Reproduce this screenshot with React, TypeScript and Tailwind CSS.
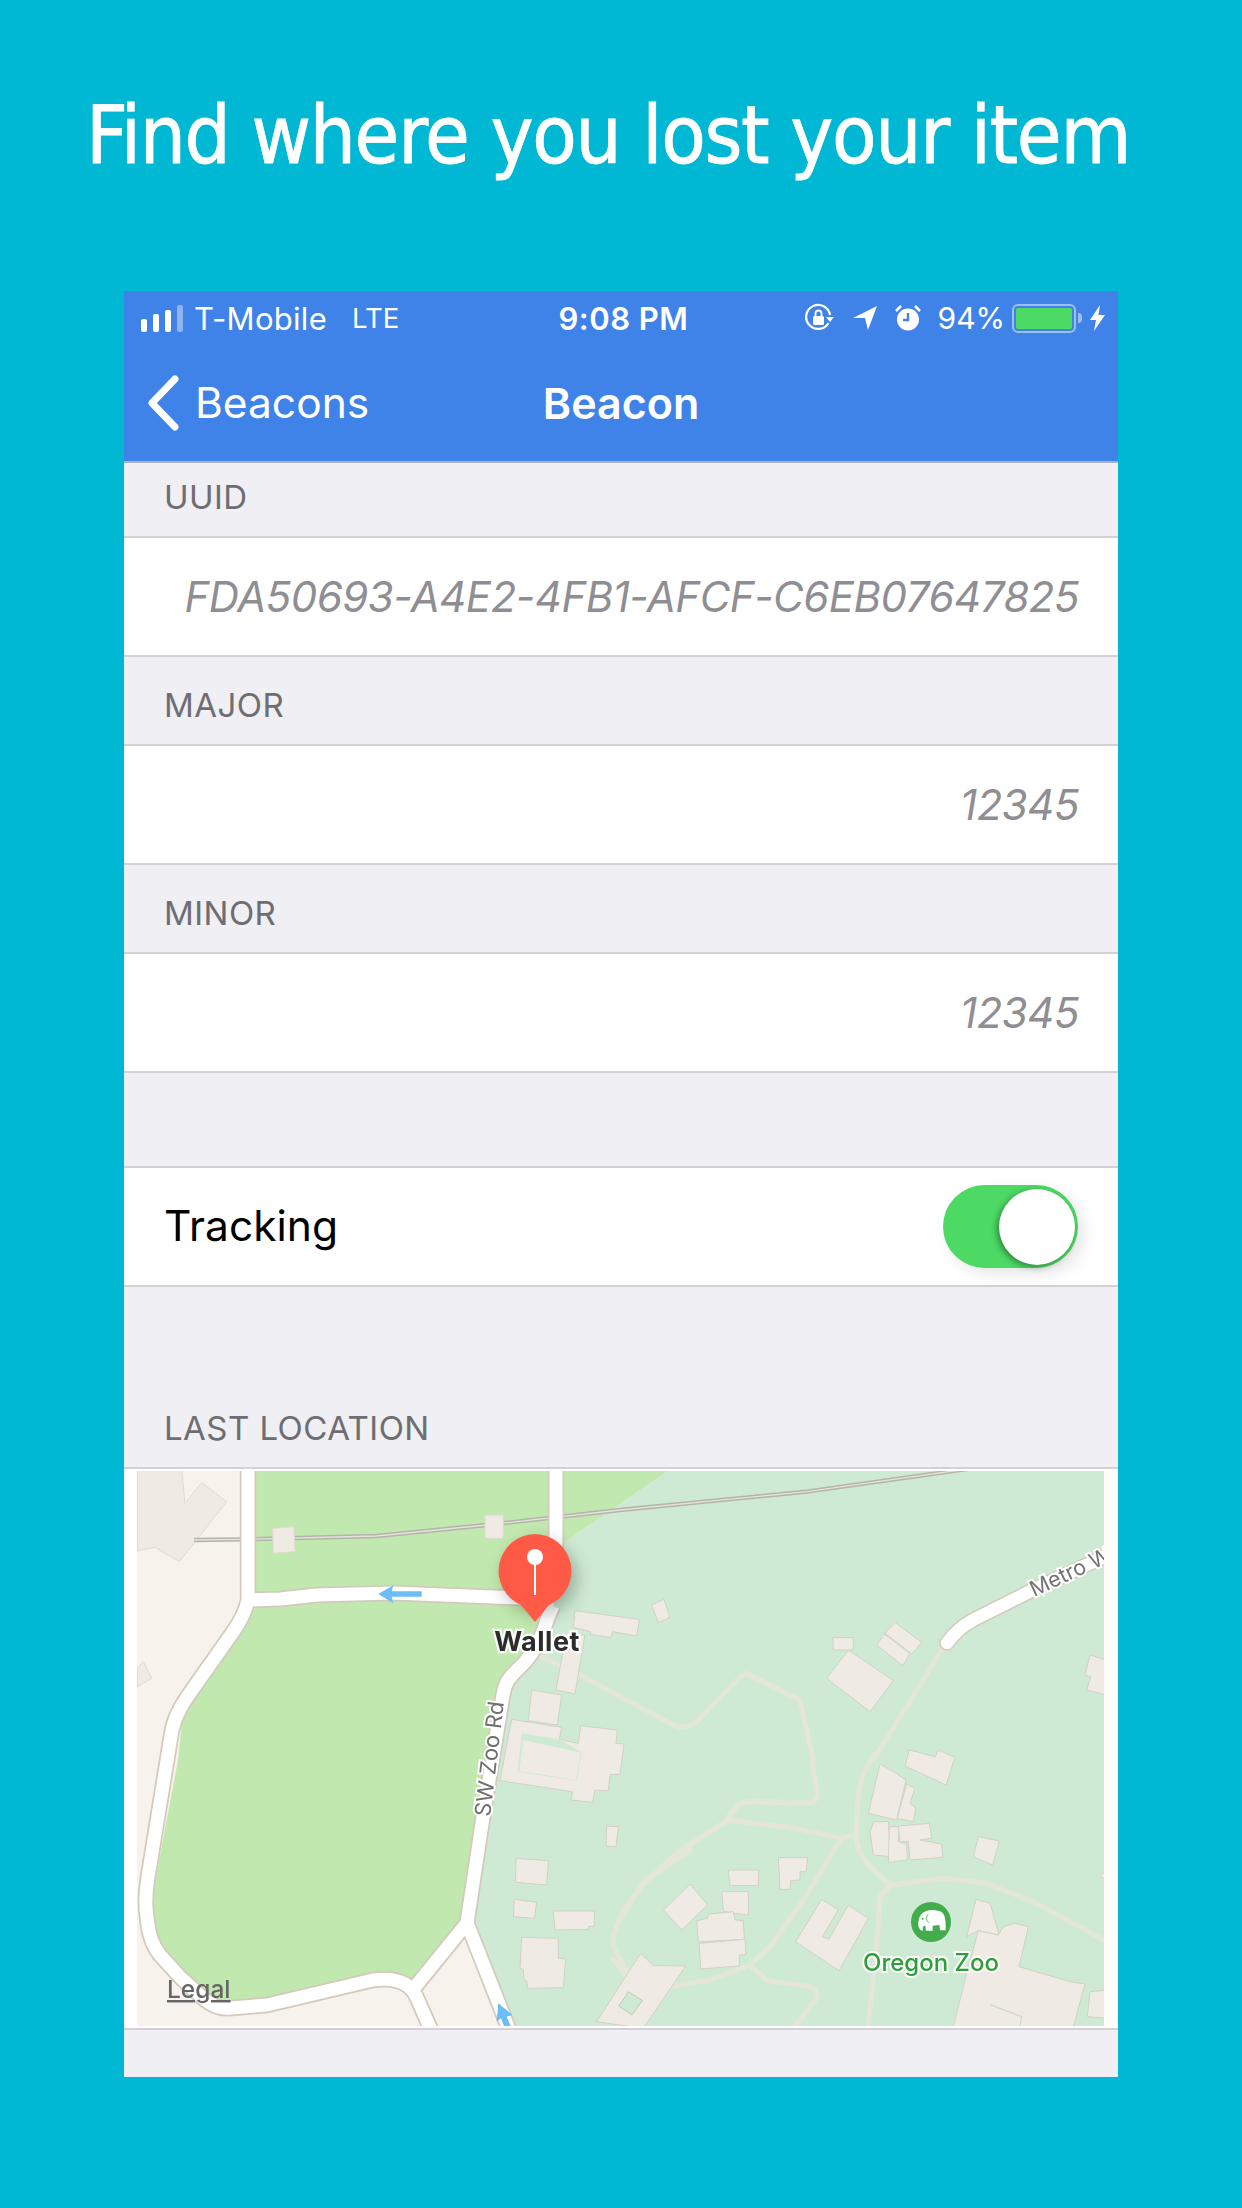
import React from "react";

const Z = ({ x, y, children }: { x: number; y: number; children: React.ReactNode }) => (
  <g transform={`translate(${x} ${y}) scale(0.33333)`}>{children}</g>
);

const B = ({ p, fill = "#efebe4", stroke = "#cfd2c4" }: { p: string; fill?: string; stroke?: string }) => (
  <polygon points={p} fill={fill} stroke={stroke} strokeWidth={3} strokeLinejoin="round" />
);

const P = ({ d }: { d: string }) => (
  <path d={d} fill="none" stroke="#e4e6d8" strokeWidth={15} strokeLinecap="round" strokeLinejoin="round" />
);

const ZOO = "#ceead4";
const PARK = "#c1e8ae";

const roads = [
  "M248 1465 L248 1600 C246 1610 240 1622 233 1632 L197 1683 C185 1700 176 1712 172 1730 L148 1877 C145 1895 145 1905 147 1917 C149 1935 152 1945 160 1955 L180 1977 L205 2000 C215 2007 222 2009 232 2008 L267 2005 L373 1980 C388 1978 398 1980 405 1984 C412 1988 414 1992 417 1998 L432 2032",
  "M248 1600 L280 1599 L317 1595 L393 1593 L520 1598 L553 1606",
  "M556 1465 L556 1560",
  "M553 1606 L547 1620 C543 1635 535 1650 525 1662 C512 1675 505 1680 503 1695 L483 1817 L467 1923",
  "M467 1923 L415 1987",
  "M467 1923 L510 2032",
];

const MapView = () => (
  <svg viewBox="137 1471 967 555" width={967} height={555} className="block blur-[0.5px]">
    <defs>
      <filter id="pinShadow" x="-50%" y="-50%" width="200%" height="200%">
        <feGaussianBlur stdDeviation="9" />
      </filter>
    </defs>
    <rect x={137} y={1471} width={967} height={555} fill="#f7f3ec" />
    <polygon points="668,1471 1104,1471 1104,2026 510,2026 467,1923 490,1790 503,1690 553,1610 563,1543" fill={ZOO} />
    <polygon points="255,1471 668,1471 563,1543 545,1600 255,1600" fill={PARK} />
    <polygon
      points="255,1608 320,1603 393,1600 520,1606 548,1612 525,1655 500,1687 490,1760 477,1827 460,1923 415,1982 407,1977 373,1973 267,1998 230,2002 207,1997 160,1950 153,1917 153,1893 178,1760 183,1713 203,1687 237,1633"
      fill={PARK}
    />

    <Z x={120} y={1460}>
      <B p="52,32 185,32 195,130 245,68 320,125 178,305 105,262 52,272" fill="#efebe4" stroke="#dedad0" />
      <B p="52,625 70,605 95,655 52,680" stroke="#dedad0" />
      <path d="M222 240 L370 238 L770 228 L1100 195 L1500 150" fill="none" stroke="#b4b4ac" strokeWidth={13} />
      <path d="M222 240 L370 238 L770 228 L1100 195 L1500 150" fill="none" stroke="#e4e4da" strokeWidth={4} />
    </Z>
    <Z x={620} y={1460}>
      <path d="M0 150 L560 95 L1050 26" fill="none" stroke="#b4b4ac" strokeWidth={13} />
      <path d="M0 150 L560 95 L1050 26" fill="none" stroke="#e4e4da" strokeWidth={4} />
    </Z>

    {/* footpaths */}
    <Z x={480} y={1590}>
      <P d="M170 195 L300 255 L570 400 Q610 425 650 395 L780 260 Q795 245 810 255 L900 300" />
      <P d="M610 775 L730 700 L770 650 Q790 635 810 635 L900 635" />
      <P d="M745 690 L900 710" />
    </Z>
    <Z x={620} y={1460}>
      <P d="M375 640 L540 720 L580 900" />
      <P d="M965 570 L760 900" />
    </Z>
    <Z x={620} y={1760}>
      <P d="M575 0 L592 100 Q590 130 560 130 L380 125 Q355 125 340 150 L320 180 L280 210 L170 280 L60 380 L0 480" />
      <P d="M320 180 L530 205 L660 235 L708 225" />
      <P d="M660 240 L550 420 L450 560 L390 615 L270 660 L150 680" />
      <P d="M765 -20 L730 40 L715 100 L708 230 Q715 280 740 310 L810 375 L970 355 L1100 370 L1250 430 L1460 545" />
      <P d="M810 375 L780 410 L770 560 L745 800" />
      <P d="M395 620 L440 660 L570 680 Q595 690 590 715 L525 800" />
      <P d="M-20 600 L20 650" />
    </Z>
    <Z x={480} y={1850}>
      <P d="M445 370 L410 310 Q390 270 410 230 L430 180 L500 90 L630 0" />
    </Z>

    {/* roads */}
    {roads.map((d) => (
      <path key={d + "c"} d={d} fill="none" stroke="#d3cabd" strokeWidth={16.5} strokeLinejoin="round" />
    ))}
    {roads.map((d) => (
      <path key={d} d={d} fill="none" stroke="#ffffff" strokeWidth={13} strokeLinejoin="round" />
    ))}
    <path d="M947 1643 C955 1632 962 1626 973 1620 L1037 1588 L1110 1554" fill="none" stroke="#d3cabd" strokeWidth={15.5} strokeLinecap="round" />
    <path d="M947 1643 C955 1632 962 1626 973 1620 L1037 1588 L1110 1554" fill="none" stroke="#ffffff" strokeWidth={12.5} strokeLinecap="round" />

    {/* buildings */}
    <Z x={120} y={1460}>
      <B p="458,205 522,200 525,275 460,280" stroke="#dedad0" />
      <B p="1095,165 1150,165 1150,235 1095,235" stroke="#dedad0" />
    </Z>
    <Z x={480} y={1590}>
      <B p="285,62 478,88 470,138 397,125 393,143 332,133 332,125 280,112" />
      <B p="515,45 552,28 570,82 535,98" />
      <B p="258,135 315,135 285,312 228,300" />
      <B p="155,300 245,315 232,405 145,392" />
      <B p="95,388 245,412 238,448 295,460 302,407 412,420 408,460 432,462 420,553 390,553 385,602 345,600 338,637 273,630 277,605 60,572" />
      <polygon points="125,430 238,448 305,487 290,572 113,545" fill={ZOO} />
      <polygon points="130,450 302,488 288,570 118,543" fill="#efebe4" />
      <B p="380,708 415,710 408,770 378,768" />
    </Z>
    <Z x={480} y={1850}>
      <B p="108,25 205,32 200,105 107,97" />
      <B p="103,148 170,157 163,205 100,200" />
      <B p="220,183 343,183 343,228 325,230 325,238 225,240" />
      <B p="125,262 235,265 235,325 257,327 250,413 143,415 140,392 132,390 130,358 120,356" />
      <B p="550,180 630,102 683,165 605,240" />
      <B p="745,60 837,60 835,107 750,107" />
      <B p="725,125 805,125 805,195 762,190 730,183" />
      <B p="650,212 683,205 685,192 760,185 765,210 790,212 793,268 655,276" />
      <B p="657,280 795,268 798,312 778,316 778,348 662,357" />
      <B p="482,310 520,347 617,348 490,535 350,515" />
      <polygon points="445,425 487,452 455,495 417,468" fill={ZOO} stroke="#bfc9b8" strokeWidth={3} />
    </Z>
    <Z x={620} y={1460}>
      <B p="638,533 700,533 700,570 640,570" />
      <B p="685,570 820,662 750,755 620,655" />
      <B p="825,487 905,547 875,582 795,520" />
      <B p="793,522 870,580 848,617 770,555" />
      <B p="1410,585 1460,600 1460,705 1400,690 1412,650 1395,645" />
      <B p="868,870 945,890 955,870 1005,892 978,975 855,918" />
    </Z>
    <Z x={620} y={1760}>
      <B p="780,12 820,35 858,60 830,180 745,160" />
      <B p="860,72 885,85 870,130 888,145 880,185 832,175" />
      <B p="762,185 805,185 815,290 760,285 750,215" />
      <B p="808,200 838,200 835,245 860,252 862,300 805,307" />
      <B p="835,198 928,190 935,235 900,240 965,252 968,292 870,300 865,245 840,245" />
      <B p="1075,230 1138,243 1118,315 1060,290" />
      <B p="1460,325 1460,360 1440,350" />
      <B p="475,293 563,293 558,335 540,335 540,360 512,362 510,388 480,388" />
      <B p="605,418 655,450 607,530 627,537 685,435 745,475 657,632 527,545" />
      <B p="1068,418 1110,430 1138,525 1075,512 1040,530" />
      <B p="1075,512 1135,525 1150,500 1185,490 1225,500 1197,620 1350,665 1395,672 1360,800 1000,800 1040,640" />
      <path d="M1112 735 L1205 770 L1200 800" fill="none" stroke="#d4d6c8" strokeWidth={4} />
      <B p="1410,695 1460,690 1460,775 1402,770" />
    </Z>

    {/* one-way arrows */}
    <Z x={120} y={1460}>
      <path d="M775 402 L820 376 L815 394 L905 394 L905 410 L815 410 L820 430 Z" fill="#6bbdf8" />
    </Z>
    <Z x={120} y={1760}>
      <path d="M1135 730 L1177 765 L1160 770 L1172 798 L1152 798 L1143 775 L1130 785 Z" fill="#6bbdf8" />
    </Z>

    {/* labels */}
    <text
      x={0}
      y={0}
      transform="translate(491 1759) rotate(-83)"
      textAnchor="middle"
      fontFamily="Inter, sans-serif"
      fontSize={22}
      fill="#6f6f6f"
      stroke="#ffffff"
      strokeWidth={4}
      paintOrder="stroke"
      dominantBaseline="middle"
    >
      SW Zoo Rd
    </text>
    <text
      x={0}
      y={0}
      transform="translate(1034 1597) rotate(-25)"
      fontFamily="Inter, sans-serif"
      fontSize={21.5}
      fill="#737373"
      stroke="#ffffff"
      strokeWidth={4}
      paintOrder="stroke"
    >
      Metro W
    </text>
    <text x={167} y={1998} fontFamily="Inter, sans-serif" fontWeight={500} fontSize={24.5} fill="#666666" textDecoration="underline">
      Legal
    </text>

    {/* zoo */}
    <circle cx={931} cy={1922} r={20} fill="#43ad4b" />
    <Z x={620} y={1760}>
      <path
        d="M896 482 C898 460 920 447 945 451 L960 454 C972 458 979 472 977 511 L960 511 L958 495 L938 497 L938 512 L918 512 L916 497 C908 497 906 505 910 512 C898 512 892 498 896 482 Z"
        fill="#ffffff"
      />
      <circle cx={908} cy={476} r={3} fill="#43ad4b" />
      <path d="M925 462 C917 470 917 482 927 488" fill="none" stroke="#43ad4b" strokeWidth={2.5} />
    </Z>
    <text
      x={931}
      y={1971}
      textAnchor="middle"
      fontFamily="Inter, sans-serif"
      fontWeight={500}
      fontSize={24}
      fill="#2f9e3a"
      stroke="#ffffff"
      strokeOpacity={0.85}
      strokeWidth={4}
      paintOrder="stroke"
    >
      Oregon Zoo
    </text>

    {/* pin */}
    <circle cx={540} cy={1578} r={36} fill="#000000" opacity={0.28} filter="url(#pinShadow)" />
    <path d="M535 1534 A37 37 0 0 1 549 1605 L535 1622 L521 1605 A37 37 0 0 1 535 1534 Z" fill="#ff5a45" />
    <circle cx={535} cy={1557} r={8} fill="#ffffff" />
    <rect x={534} y={1565} width={2} height={30} fill="#ffffff" />
    <text
      x={537}
      y={1651}
      textAnchor="middle"
      fontFamily="Inter, sans-serif"
      fontWeight={700}
      fontSize={27}
      letterSpacing={0.5}
      fill="#2c2c2c"
      stroke="#ffffff"
      strokeOpacity={0.9}
      strokeWidth={4.5}
      paintOrder="stroke"
    >
      Wallet
    </text>
  </svg>
);

const SectionHeader = ({ label, h }: { label: string; h: string }) => (
  <div className={`${h} flex items-end bg-[#efeff4] pb-[19px] pl-[40px]`}>
    <span className="text-[33px] leading-[40px] tracking-[0.45px] text-[#6d6d72]">{label}</span>
  </div>
);

const ValueRow = ({ value }: { value: string }) => (
  <div className="flex h-[121px] items-center justify-end border-y-2 border-[#d2d2d6] bg-white pr-[39px]">
    <span className="text-[42px] italic leading-none tracking-[-0.47px] text-[#8e8e93]">{value}</span>
  </div>
);

const StatusIcons = () => (
  <div className="flex items-center justify-end gap-0 pr-[13px]">
    <svg width={30} height={30} viewBox="0 0 30 30" className="mr-[18px]">
      <path d="M24.5 20 A12 12 0 1 1 26 12" fill="none" stroke="#fff" strokeWidth={2.2} />
      <path d="M22 14 L30 14 L26 19 Z" fill="#fff" />
      <rect x={9} y={13} width={11} height={9} rx={1.5} fill="#fff" />
      <path d="M11.5 13 V10.5 A3 3 0 0 1 17.5 10.5 V13" fill="none" stroke="#fff" strokeWidth={1.8} />
    </svg>
    <svg width={26} height={26} viewBox="0 0 26 26" className="mr-[16px]">
      <path d="M25 1 L16 25 L13 13 L1 13 Z" fill="#fff" />
    </svg>
    <svg width={28} height={28} viewBox="0 0 28 28" className="mr-[16px]">
      <circle cx={14} cy={15.5} r={11} fill="#fff" />
      <path d="M14 9 V16 H9" fill="none" stroke="#3f83e9" strokeWidth={2.4} />
      <path d="M2 7 L7 2 M26 7 L21 2" stroke="#fff" strokeWidth={2.6} />
    </svg>
    <span className="mr-[7px] text-[30px] leading-none text-white">94%</span>
    <div className="flex h-[29px] w-[64px] items-center rounded-[6px] border-2 border-[#9dbff4] p-[2px]">
      <div className="h-full w-full rounded-[2px] bg-[#4cd964]" />
    </div>
    <div className="ml-[2px] mr-[8px] h-[10px] w-[4px] rounded-r-full bg-[#9dbff4]" />
    <svg width={15} height={26} viewBox="0 0 15 26">
      <path d="M10 0 L0 15 L6 15 L4 26 L15 10 L8.5 10 Z" fill="#fff" />
    </svg>
  </div>
);

export default function App() {
  return (
    <div className="min-h-[2208px] bg-[#00b8d4] [font-family:Inter,sans-serif]">
      <div className="flex h-[291px] items-start pl-[86px] pt-[85px]">
        <h1 className="whitespace-nowrap text-[81px] font-normal leading-[100px] tracking-[-1.3px] text-white [-webkit-text-stroke:0.8px_white] [font-family:'DejaVu_Sans_Condensed','DejaVu_Sans',sans-serif] [font-stretch:condensed]">
          Find where you lost your item
        </h1>
      </div>

      <div className="mx-auto flex w-[994px] flex-col bg-[#efeff4]">
        <div className="flex h-[172px] flex-col border-b-2 border-[#a9b2c4] bg-[#3f83e9]">
          <div className="grid h-[54px] grid-cols-[1fr_auto_1fr] items-center">
            <div className="flex items-center pl-[17px]">
              <div className="mr-[11px] flex h-[27px] items-end gap-[6px]">
                <div className="h-[13px] w-[6px] rounded-[2px] bg-white" />
                <div className="h-[18px] w-[6px] rounded-[2px] bg-white" />
                <div className="h-[22px] w-[6px] rounded-[2px] bg-white" />
                <div className="h-[27px] w-[6px] rounded-[2px] bg-[#8fb6f2]" />
              </div>
              <span className="text-[31px] leading-none tracking-[0.3px] text-white">T-Mobile</span>
              <span className="ml-[25px] pt-[2px] text-[27.5px] leading-none text-white">LTE</span>
            </div>
            <span className="pl-[5px] text-[31px] font-semibold leading-none tracking-[0.5px] text-white">9:08 PM</span>
            <StatusIcons />
          </div>
          <div className="grid h-[116px] grid-cols-[1fr_auto_1fr] items-center">
            <div className="flex items-center pl-[22px]">
              <svg width={34} height={56} viewBox="0 0 34 56" className="mr-[15px]">
                <path d="M29 4 L6 28 L29 52" fill="none" stroke="#fff" strokeWidth={7} strokeLinecap="round" strokeLinejoin="round" />
              </svg>
              <span className="text-[42.5px] leading-none text-white">Beacons</span>
            </div>
            <span className="text-[43px] font-semibold leading-none text-white">Beacon</span>
            <div />
          </div>
        </div>

        <SectionHeader label="UUID" h="h-[73px]" />
        <ValueRow value="FDA50693-A4E2-4FB1-AFCF-C6EB07647825" />
        <SectionHeader label="MAJOR" h="h-[87px]" />
        <ValueRow value="12345" />
        <SectionHeader label="MINOR" h="h-[87px]" />
        <ValueRow value="12345" />
        <div className="h-[93px]" />

        <div className="flex h-[121px] items-center justify-between border-y-2 border-[#d2d2d6] bg-white pl-[40px] pr-[40px]">
          <span className="text-[42.5px] leading-none text-black">Tracking</span>
          <div className="flex h-[83px] w-[135px] items-center justify-end rounded-full bg-[#4cd964] pr-[3px] shadow-[6px_6px_16px_rgba(0,0,0,0.1)]">
            <div className="h-[76px] w-[76px] rounded-full bg-white shadow-[-2px_2px_6px_rgba(0,0,0,0.4)]" />
          </div>
        </div>

        <SectionHeader label="LAST LOCATION" h="h-[180px]" />

        <div className="border-y-2 border-[#d2d2d6] bg-white pb-[2px] pl-[13px] pt-[2px]">
          <MapView />
        </div>
        <div className="h-[47px]" />
      </div>
    </div>
  );
}
